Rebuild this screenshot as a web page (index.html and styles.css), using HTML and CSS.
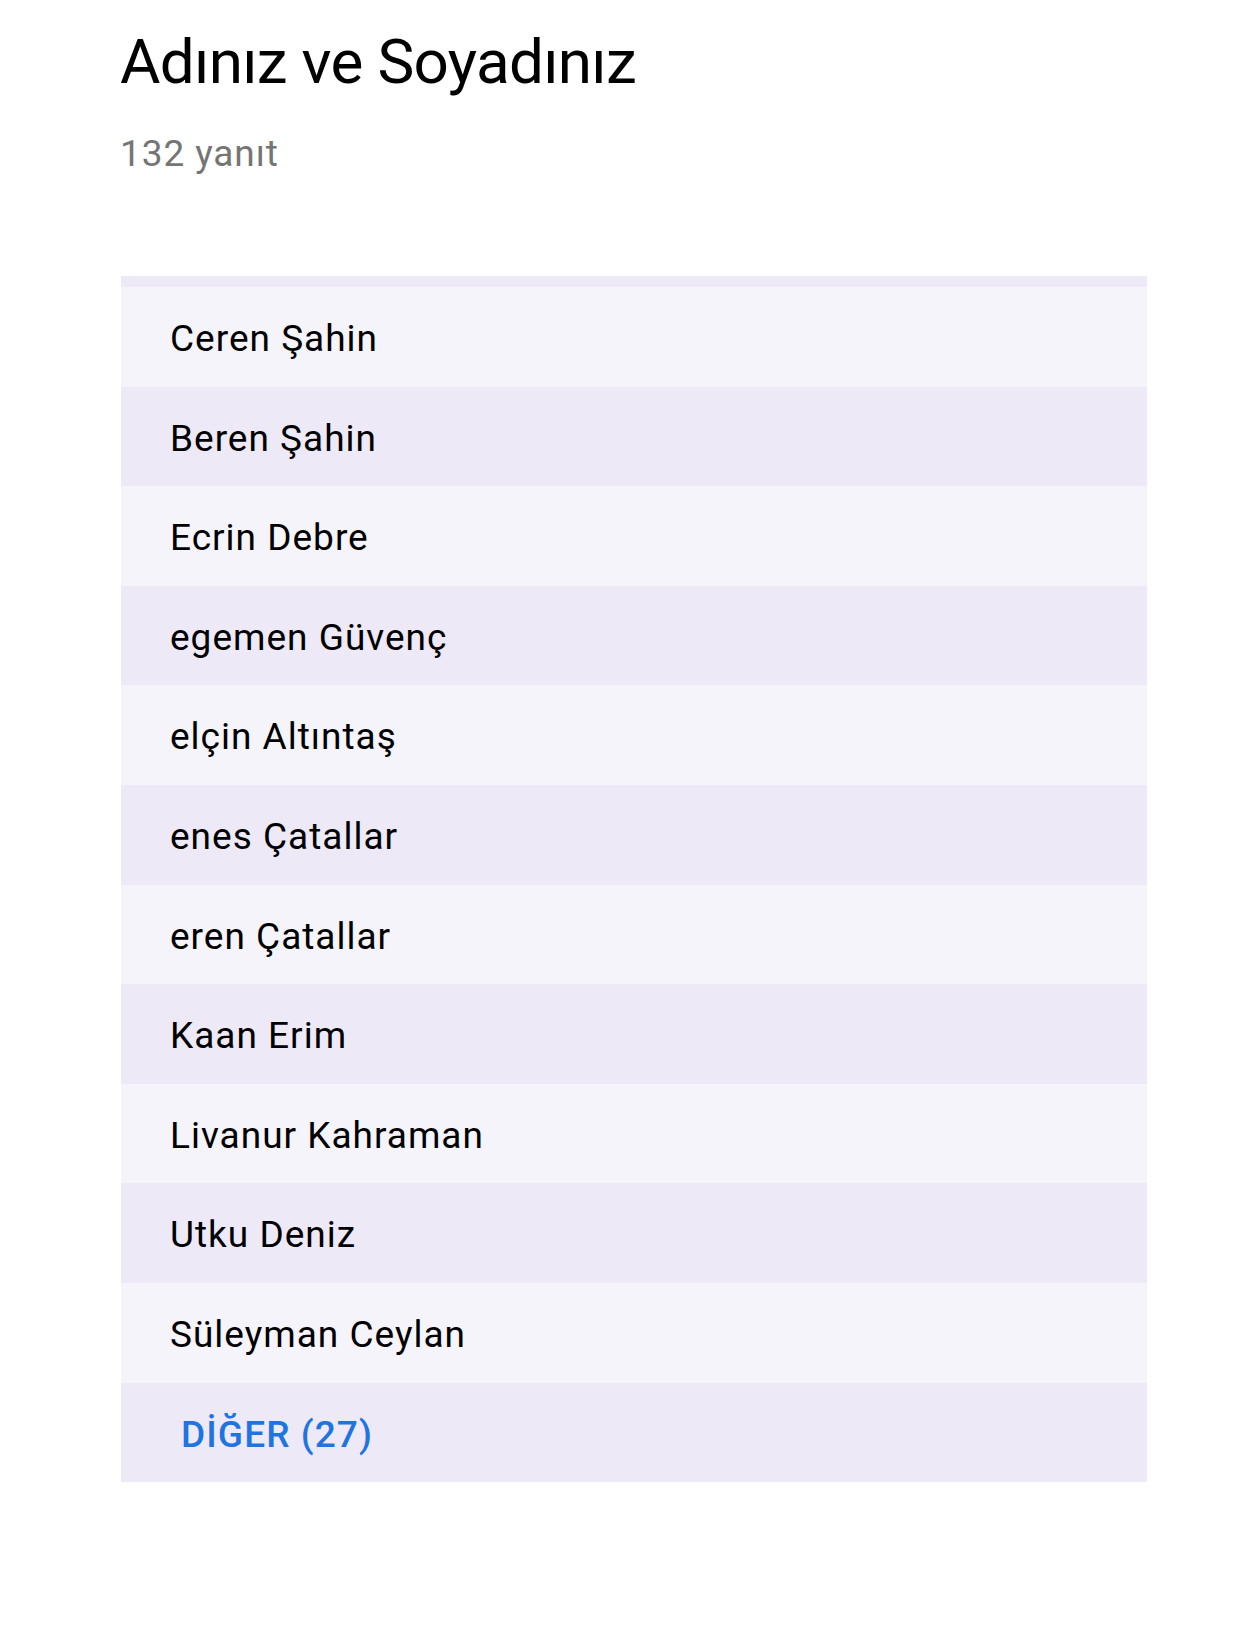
FILE: index.html
```html
<!DOCTYPE html>
<html lang="tr">
<head>
<meta charset="utf-8">
<title>Adınız ve Soyadınız</title>
<link rel="stylesheet" href="styles.css">
</head>
<body>
<main class="page">
  <h1 class="title">Adınız ve Soyadınız</h1>
  <p class="count">132 yanıt</p>
  <div class="answers">
    <div class="strip"></div>
    <div class="row light">Ceren Şahin</div>
    <div class="row dark">Beren Şahin</div>
    <div class="row light">Ecrin Debre</div>
    <div class="row dark">egemen Güvenç</div>
    <div class="row light">elçin Altıntaş</div>
    <div class="row dark">enes Çatallar</div>
    <div class="row light">eren Çatallar</div>
    <div class="row dark">Kaan Erim</div>
    <div class="row light">Livanur Kahraman</div>
    <div class="row dark">Utku Deniz</div>
    <div class="row light">Süleyman Ceylan</div>
    <div class="row dark"><span class="more">DİĞER (27)</span></div>
  </div>
</main>
</body>
</html>
```
FILE: styles.css
```css
html, body {
  margin: 0;
  padding: 0;
  background: #ffffff;
}
body {
  font-family: Roboto, "Noto Sans", "Liberation Sans", sans-serif;
  color: #000000;
}
.page {
  padding: 22px 88px 0 121px;
}
.title {
  margin: 0 0 0 -1px;
  font-size: 62px;
  line-height: 80px;
  font-weight: 400;
  letter-spacing: -0.7px;
}
.count {
  margin: 28px 0 0 -1px;
  font-size: 37px;
  line-height: 48px;
  color: #757575;
  letter-spacing: 0.9px;
}
.answers {
  margin-top: 98px;
  width: 1026px;
}
.strip {
  height: 11px;
  background: #ede9f7;
}
.row {
  height: 99.6px;
  box-sizing: border-box;
  padding: 5px 0 0 49px;
  font-size: 37px;
  line-height: 94.6px;
  letter-spacing: 1px;
  white-space: nowrap;
}
.light { background: #f6f4fb; }
.dark { background: #ede9f7; }
.more {
  padding-left: 11px;
  color: #1e74e0;
  font-weight: 500;
  letter-spacing: 1.1px;
}
```
